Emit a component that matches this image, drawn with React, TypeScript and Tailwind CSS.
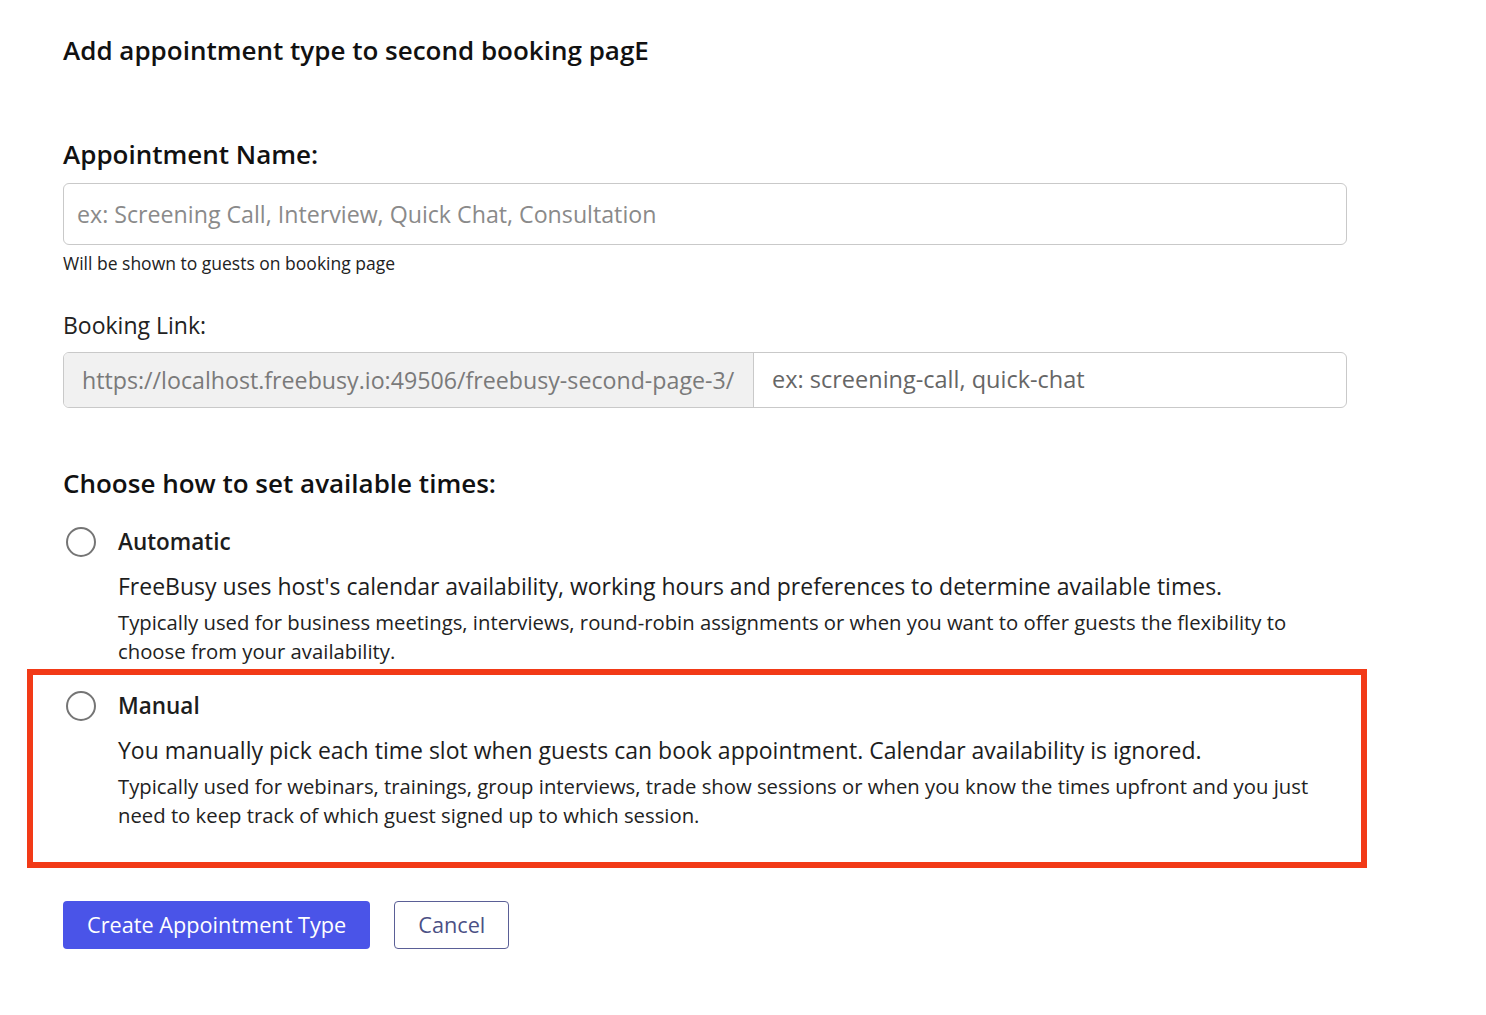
import React, { useState } from 'react';

const font = { fontFamily: '"Open Sans", "Noto Sans", sans-serif' };

interface OptionProps {
  checked: boolean;
  onSelect: () => void;
  title: string;
  lead: string;
  note: string;
}

const TimeOption: React.FC<OptionProps> = ({ checked, onSelect, title, lead, note }) => (
  <div className="flex flex-col">
    <label className="flex items-center h-[32px] gap-[22px] cursor-pointer" onClick={onSelect}>
      <span className="ml-[3px] w-[30px] h-[30px] rounded-full border-[2.5px] border-[#757575] flex items-center justify-center">
        {checked && <span className="w-3 h-3 rounded-full bg-[#757575]" />}
      </span>
      <span className="text-[22.5px] font-semibold text-[#1d1d1d]">{title}</span>
    </label>
    <div className="pl-[55px] pt-[13px]">
      <p className="text-[23px] leading-[30px] text-[#1d1d1d]">{lead}</p>
      <p className="mt-[7px] text-[20.3px] leading-[29px] text-[#222]">{note}</p>
    </div>
  </div>
);

export default function App() {
  const [mode, setMode] = useState<'auto' | 'manual' | ''>('');

  return (
    <div className="min-h-screen bg-white" style={font}>
      <div className="w-[1284px] ml-[63px] pt-[34px] pb-16">
        <h1 className="text-[26px] leading-[32px] font-semibold text-[#111]">Add appointment type to second booking pagE</h1>

        <div className="mt-[72px]">
          <h2 className="text-[26px] leading-[32px] font-semibold text-[#111]">Appointment Name:</h2>
          <input
            className="mt-[13px] w-full h-[62px] rounded-md border border-[#c9c9c9] px-[13px] text-[23.2px] text-[#333] placeholder:text-[#8a8a8a] outline-none"
            placeholder="ex: Screening Call, Interview, Quick Chat, Consultation"
          />
          <p className="mt-[7px] text-[17.5px] leading-[22px] text-[#222]">Will be shown to guests on booking page</p>
        </div>

        <div className="mt-[36px]">
          <label className="block text-[23px] leading-[30px] text-[#222]">Booking Link:</label>
          <div className="mt-[12px] flex h-[56px] rounded-md border border-[#c9c9c9] overflow-hidden">
            <span className="w-[690px] shrink-0 flex items-center px-[18px] bg-[#f1f1f1] border-r border-[#c9c9c9] text-[23.2px] text-[#7a7a7a] whitespace-nowrap">
              https://localhost.freebusy.io:49506/freebusy-second-page-3/
            </span>
            <input
              className="flex-1 px-[18px] text-[23.5px] text-[#333] placeholder:text-[#666] outline-none"
              placeholder="ex: screening-call, quick-chat"
            />
          </div>
        </div>

        <h2 className="mt-[59px] text-[26px] leading-[32px] font-semibold text-[#111]">Choose how to set available times:</h2>

        <div className="mt-[27px]">
          <TimeOption
            checked={mode === 'auto'}
            onSelect={() => setMode('auto')}
            title="Automatic"
            lead="FreeBusy uses host's calendar availability, working hours and preferences to determine available times."
            note="Typically used for business meetings, interviews, round-robin assignments or when you want to offer guests the flexibility to choose from your availability."
          />
        </div>

        {/* highlighted option */}
        <div className="mt-[3px] -ml-[36px] w-[1340px] border-[6px] border-[#f23a17] pl-[30px] pr-[20px] pt-[15px] pb-[32px]">
          <TimeOption
            checked={mode === 'manual'}
            onSelect={() => setMode('manual')}
            title="Manual"
            lead="You manually pick each time slot when guests can book appointment. Calendar availability is ignored."
            note="Typically used for webinars, trainings, group interviews, trade show sessions or when you know the times upfront and you just need to keep track of which guest signed up to which session."
          />
        </div>

        <div className="mt-[33px] flex gap-6">
          <button className="h-[48px] px-6 rounded bg-[#4a54e8] text-white text-[21.7px]">Create Appointment Type</button>
          <button className="h-[48px] w-[115px] rounded border border-[#5a5f96] text-[#4b5085] text-[21.7px]">Cancel</button>
        </div>
      </div>
    </div>
  );
}
